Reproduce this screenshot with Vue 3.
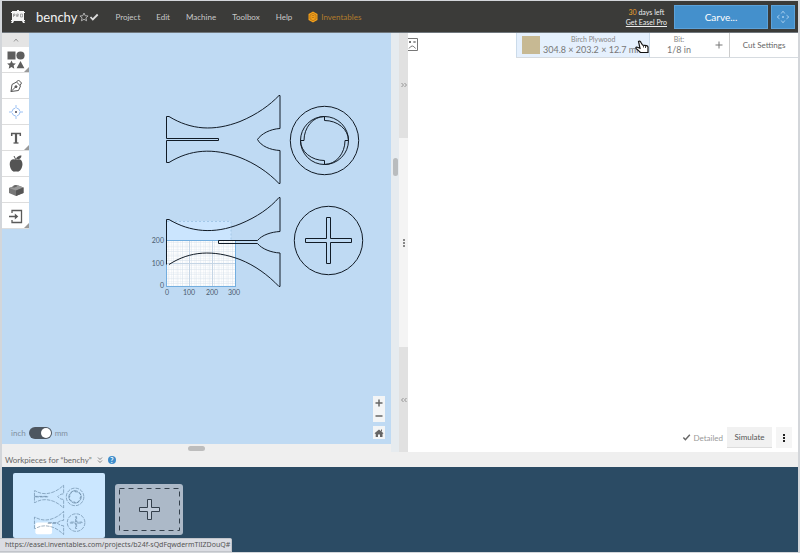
<script setup>
import { ref } from 'vue'

const menus = ['Project', 'Edit', 'Machine', 'Toolbox', 'Help']
const metric = ref(true)
const xTicks = [
  { x: 167, label: '0' },
  { x: 189, label: '100' },
  { x: 212, label: '200' },
  { x: 234, label: '300' },
]
const yTicks = [
  { y: 243, label: '200' },
  { y: 266, label: '100' },
  { y: 288, label: '0' },
]
</script>

<template>
  <div class="app">
    <header class="topbar">
      <svg class="logo" viewBox="0 0 16 16" aria-label="Easel Pro">
        <path d="M7 1h2v1h5v1h1v1h-1v7h1v1h-1l1 2h-2l-1-2H4l-1 2H1l1-2H1v-1h1V4H1V3h1V2h5z" fill="#f4f4f4" />
        <path d="M3.500 8V5h1.500v1.500H3.500M6.800 8V5h1.500v1.500H6.800L8.300 8M10.500 5h2v3h-2z" fill="none" stroke="#888" stroke-width=".7" />
      </svg>
      <h1 class="title">benchy</h1>
      <svg class="star" viewBox="0 0 10 10" aria-hidden="true"><path d="M5 1l1.200 2.700 2.900.3-2.200 1.900.7 2.900L5 7.300 2.400 8.800l.7-2.900L.9 4l2.900-.3z" fill="none" stroke="#bbb" stroke-width=".9" /></svg>
      <svg class="saved" viewBox="0 0 10 10" aria-hidden="true"><path d="M1.500 5l2.300 2.500L8.700 2.500" fill="none" stroke="#ddd" stroke-width="1.800" /></svg>
      <nav class="menu">
        <a v-for="m in menus" :key="m" href="#">{{ m }}</a>
        <a href="#" class="brand">
          <svg class="hex" viewBox="0 0 10 12" aria-hidden="true">
            <path d="M5 .5l4.500 2.500v6L5 11.500.5 9V3z" fill="#f5a11c" />
            <path d="M2 4l3-1.700L8 4v4L5 9.700 2 8zM3.500 5L5 4.200 6.500 5M3.500 7L5 6.200l1.500.8" fill="none" stroke="#a86c12" stroke-width=".7" />
          </svg>
          Inventables
        </a>
      </nav>
      <div class="trial">
        <span><b>30</b> days left</span>
        <a href="#">Get Easel Pro</a>
      </div>
      <button class="carve">Carve...</button>
      <button class="jog" aria-label="Jog machine">
        <svg viewBox="0 0 14 14"><path d="M5.200 3.500L7 1.200l1.800 2.300M5.200 10.500L7 12.800l1.800-2.300M3.500 5.200L1.200 7l2.300 1.800M10.500 5.200L12.800 7l-2.300 1.800M7 6v2M6 7h2" fill="none" stroke="#a4cdee" /></svg>
      </button>
    </header>

    <main class="workspace">
      <div class="left">
        <section class="canvas">
          <svg class="drawing" viewBox="2 33 390 411" width="390" height="411">
            <defs>
              <pattern id="grid" x="166.500" y="240" width="4.560" height="4.560" patternUnits="userSpaceOnUse">
                <path d="M0 0H4.560M0 2.280H4.560M0 0V4.560M2.280 0V4.560" stroke="#d3dee9" stroke-width=".5" />
              </pattern>
              <g id="parts" fill="none">
                <path d="M166.500 138.500V116.500H169C191 130 214 131.500 240 121.500C257 114.500 270 105 279 95.500H280V128.500C270 129 261 134 257.500 139.500C261 146 270 150 280 150.500V183.500H279C268 172 255 163.500 240 157.500C213 147.500 190 149.500 169 162.500H166.500V140.500H218.500V138.500Z" />
                <circle cx="324.500" cy="140.500" r="34.200" />
                <circle cx="324.500" cy="140.500" r="24" />
                <path d="M324.500 116.500V120.500A24 20 0 0 1 348.500 140.500H345A20.500 24 0 0 1 324.500 164.500V160.500A24 20 0 0 1 300.500 140.500H304A20.500 24 0 0 1 324.500 116.500" />
                <path d="M166.500 264.500V219.500H169C190 232 214 234.500 240 224C257 217 270 208 279 197.500H280V231.500C271 232 262 235 257.500 240.500H218.500V243.500H257.500C262 249 271 252.500 280 253V286.500H279C268 275 255 265.500 240 259.500C213 249.500 190 251 169 264.500" />
                <circle cx="328.500" cy="240.500" r="34.200" />
                <path d="M326.500 217.500H330.500V238.500H351.500V242.500H330.500V263.500H326.500V242.500H305.500V238.500H326.500Z" />
              </g>
            </defs>
            <rect x="167" y="221" width="64" height="19" fill="#cbe5fe" />
            <path d="M167 221.500H231V240" fill="none" stroke="#a3c8e8" stroke-dasharray="2 2" />
            <rect x="166.500" y="240.500" width="69" height="46" fill="#fff" />
            <rect x="166.500" y="240.500" width="69" height="46" fill="url(#grid)" />
            <path d="M189.500 240V286M212.500 240V286M167 263.500H235" stroke="#c5d5e5" />
            <rect x="166.500" y="240.500" width="69" height="46" fill="none" stroke="#73aedf" />
            <use href="#parts" stroke="#111b26" />
            <g class="ticks">
              <text v-for="t in xTicks" :key="'x' + t.x" :x="t.x" y="295" text-anchor="middle">{{ t.label }}</text>
              <text v-for="t in yTicks" :key="'y' + t.y" x="164" :y="t.y" text-anchor="end">{{ t.label }}</text>
            </g>
          </svg>

          <div class="tools">
            <button class="collapse" aria-label="Collapse toolbar">
              <svg viewBox="0 0 8 8"><path d="M2 5.500L4 3l2 2.500" fill="none" stroke="#999" /></svg>
            </button>
            <button class="tool more" aria-label="Shapes">
              <svg viewBox="0 0 20 20" fill="#5e5e5e"><path d="M1.500 1.500h8v8h-8z" /><circle cx="14.500" cy="5.500" r="4.100" /><path d="M5.500 10.500l1.300 2.800 3.100.3-2.300 2 .7 3.100-2.800-1.600-2.800 1.600.7-3.100-2.300-2 3.100-.3zM14.500 11l3.900 7.300h-7.800z" /></svg>
            </button>
            <button class="tool" aria-label="Pen">
              <svg viewBox="0 0 20 20" fill="none" stroke="#555"><path d="M5 15.500l1-7 4.500-2.500 4 4-2 4.500zM10.500 6l2-2 3 3-1.500 2.500M5 15.500l4.500-4.500" /><circle cx="10" cy="10.700" r="1" fill="#555" /></svg>
            </button>
            <button class="tool" aria-label="Drill point">
              <svg viewBox="0 0 20 20" fill="none" stroke="#9dc2f4"><circle cx="10" cy="10" r="4" stroke-dasharray="5 1.300" /><path d="M10 3v3M10 14v3M3 10h3M14 10h3" /><circle cx="10" cy="10" r="1" fill="#445" stroke="none" /></svg>
            </button>
            <button class="tool more" aria-label="Text">
              <svg viewBox="0 0 20 20" fill="none" stroke="#5a5a5a"><path d="M5.700 8V5.500h8.600V8" stroke-width="1.500" /><path d="M10 5v10" stroke-width="2.200" /><path d="M7.500 15h5" stroke-width="1.300" /></svg>
            </button>
            <button class="tool" aria-label="Icon library">
              <svg viewBox="0 0 20 20"><path d="M10.500 6C7 4 3.500 6 3.700 10.200 4 14.500 6.500 18 8.500 17.600c1-.3 2-.3 3 0 2 .4 4.700-3 5-7.400C16.500 6 13.500 4 10.500 6z" fill="#545454" /><path d="M10 6c0-3 2.500-4.500 5.500-4.500C15.500 4 13.500 5.500 10.500 5.500z" fill="#545454" /><path d="M8 2l2 4" stroke="#545454" /></svg>
            </button>
            <button class="tool" aria-label="Apps">
              <svg viewBox="0 0 20 20"><path d="M3 8l8-3 6.500 2.500v5.500L10 16l-7-3z" fill="#777" /><path d="M3 8l8-3 6.500 2.500L10 10.500z" fill="#999" /><path d="M10 10.500l7.500-3v5.500L10 16z" fill="#555" /><path d="M5.500 7.500l2-1v-1l2-.6 1.500.6v1l-2.500 1z" fill="#666" /></svg>
            </button>
            <button class="tool more" aria-label="Import">
              <svg viewBox="0 0 20 20" fill="none" stroke="#5a5a5a" stroke-width="1.300"><path d="M6 7V4.500h9.500v12H6V14M3 10.500h8" /><path d="M8.800 7.500l3.500 3-3.500 3z" fill="#5a5a5a" stroke="none" /></svg>
            </button>
          </div>

          <div class="canvas-foot">
            <label class="units">
              <span>inch</span>
              <input v-model="metric" type="checkbox" aria-label="Use millimetres" />
              <span>mm</span>
            </label>
            <div class="zoom">
              <div class="zoom-pair">
                <button aria-label="Zoom in"><svg viewBox="0 0 12 12"><path d="M6 2.500v7M2.500 6h7" stroke="#666" stroke-width="1.500" /></svg></button>
                <button aria-label="Zoom out"><svg viewBox="0 0 12 12"><path d="M2.500 6h7" stroke="#666" stroke-width="1.500" /></svg></button>
              </div>
              <button class="home" aria-label="Reset view"><svg viewBox="0 0 12 12"><path d="M1.500 6.200L6 2.500l4.500 3.700L9.500 7v3H7V7.500H5V10H2.700V7z" fill="#666" /><path d="M8.500 2.500v2" stroke="#666" /></svg></button>
            </div>
          </div>
        </section>
        <div class="gutter"><i class="v-thumb"></i></div>
        <div class="h-scroll"><i class="h-thumb"></i></div>
      </div>

      <div class="splitter">
        <button class="grey" aria-label="Expand design">
          <svg viewBox="0 0 8 8"><path d="M1.500 2l2 2-2 2M4.500 2l2 2-2 2" fill="none" stroke="#888" stroke-width=".9" /></svg>
        </button>
        <div class="grip"><i></i><i></i><i></i></div>
        <button class="grey" aria-label="Expand preview">
          <svg viewBox="0 0 8 8"><path d="M3.500 2l-2 2 2 2M6.500 2l-2 2 2 2" fill="none" stroke="#888" stroke-width=".9" /></svg>
        </button>
      </div>

      <section class="preview">
        <div class="preview-head">
          <svg class="sad" viewBox="0 0 12 13" aria-label="Preview unavailable"><path d="M0 .5h9.500v12H0M1 3l2 2M3 3l-2 2M5.500 3l2 2M7.500 3l-2 2M1 10.500Q4.300 5.500 7.500 10.500" fill="none" stroke="#777" /></svg>
          <div class="settings">
            <button class="material">
              <i class="swatch"></i>
              <span class="stack"><small>Birch Plywood</small><span class="size">304.8 × 203.2 × 12.7 mm</span></span>
            </button>
            <button class="bit"><small>Bit:</small><span>1/8 in</span></button>
            <button class="add" aria-label="Add bit"><svg viewBox="0 0 10 10"><path d="M5 1.500v7M1.500 5h7" stroke="#777" /></svg></button>
            <button class="cut">Cut Settings</button>
            <svg class="pointer" viewBox="0 0 14 14" aria-hidden="true"><path d="M3.500 1.500c1-1 2 0 2.500 1L7.500 5l4 .7c1.200.3 1.700 1 1.500 2V12.500H5.500L1 8.500c-.5-1 .5-1.700 1.500-1.200L5 8.200z" fill="#fff" stroke="#111" stroke-width="1.200" /><path d="M8.500 5.500v2M10.500 6v2" stroke="#111" stroke-width=".8" /></svg>
          </div>
        </div>
        <div class="preview-foot">
          <span class="detail"><svg viewBox="0 0 10 10" aria-hidden="true"><path d="M1.500 5l2.300 2.500L8.700 2" fill="none" stroke="#666" stroke-width="1.600" /></svg>Detailed</span>
          <button class="simulate">Simulate</button>
          <button class="dots" aria-label="More options"><i></i><i></i><i></i></button>
        </div>
      </section>
    </main>

    <section class="pieces">
      <div class="pieces-head">
        <span>Workpieces for “benchy”</span>
        <svg class="chev" viewBox="0 0 8 8" aria-hidden="true"><path d="M2 1.500l2 2 2-2M2 4.500l2 2 2-2" fill="none" stroke="#777" stroke-width=".9" /></svg>
        <button class="help" aria-label="Help">?</button>
      </div>
      <div class="pieces-list">
        <button class="thumb" aria-label="Workpiece 1">
          <svg viewBox="83 48 358 252">
            <rect x="170" y="240" width="65" height="46" rx="8" fill="#fff" />
            <use href="#parts" stroke="#4a6c8a" stroke-width="2" stroke-dasharray="14 4" />
          </svg>
        </button>
        <button class="new" aria-label="Add workpiece">
          <svg viewBox="0 0 68 51"><rect x="4.500" y="4.500" width="60" height="42" fill="none" stroke="#34404c" stroke-dasharray="5 4" /><path d="M32.500 15.500h4v8h8v4h-8v8h-4v-8h-8v-4h8z" fill="#c1ccda" stroke="#34404c" /></svg>
        </button>
      </div>
    </section>
    <div class="status">https://easel.inventables.com/projects/b24f-sQdFqwdermTlIZDouQ#</div>
  </div>
</template>

<style>
body { margin: 0; }
</style>

<style scoped>
* { box-sizing: border-box; }
.app {
  position: relative;
  display: flex;
  flex-direction: column;
  min-height: 100vh;
  padding: 1px 2px;
  background: #d3d6da;
  font-family: Lato, "Liberation Sans", sans-serif;
  font-size: 8px;
  color: #666;
}
button { display: flex; align-items: center; justify-content: center; margin: 0; padding: 0; border: 0; background: none; font: inherit; color: inherit; }
svg { display: block; flex: none; }
a { color: inherit; text-decoration: none; }

.topbar { display: flex; align-items: center; height: 32px; padding: 0 3px 0 8px; background: #3b3b39; color: #c9c9c9; border-bottom: 1px solid #70777d; }
.logo { width: 16px; height: 16px; }
.title { margin: 0 2px 0 10px; font-size: 13px; line-height: 18px; font-weight: 400; color: #f2f2f2; }
.star, .saved { width: 10px; height: 10px; }
.menu { display: flex; align-items: center; gap: 16px; flex: 1; margin-left: 16px; }
.brand { display: flex; align-items: center; gap: 3px; color: #b27c2c; }
.hex { width: 10px; height: 12px; }
.trial { display: flex; flex-direction: column; align-items: center; margin-right: 7px; font-size: 7px; line-height: 10px; color: #eee; }
.trial b { font-weight: 400; color: #e8a130; }
.trial a { text-decoration: underline; }
.carve { width: 94px; height: 24px; margin-right: 3px; background: #4490cc; border: 1px solid #5ca2da; color: #fff; font-size: 10px; }
.jog { width: 24px; height: 24px; background: #4490cc; border: 1px solid #5ca2da; }
.jog svg { width: 14px; height: 14px; }

.workspace { display: flex; flex: 1; background: #efefef; }
.left { flex: 51; display: grid; grid-template-columns: 1fr 8px; grid-template-rows: 1fr 8px; }
.canvas { position: relative; display: flex; flex-direction: column; justify-content: space-between; background: #bfdaf3; overflow: hidden; }
.drawing { position: absolute; top: 0; left: 0; }
.ticks { font-size: 7px; fill: #4b5c6e; }
.tools { position: relative; width: 27px; background: #fff; }
.collapse { width: 100%; height: 14px; background: #e4e4e4; }
.collapse svg { width: 8px; height: 8px; }
.tool { position: relative; width: 100%; height: 26px; border-bottom: 1px solid #ddd; }
.tool svg { width: 20px; height: 20px; }
.more::after { content: ""; position: absolute; right: 0; bottom: 0; border: solid transparent; border-width: 5px 0 0 5px; border-bottom: 5px solid #999; border-top: 0; }
.canvas-foot { position: relative; display: flex; align-items: flex-end; justify-content: space-between; padding: 0 6px 5px 9px; }
.units { display: flex; align-items: center; gap: 3px; line-height: 12px; color: #7f8f9e; }
.units input { appearance: none; display: flex; justify-content: flex-end; width: 23px; height: 12px; margin: 0; border-radius: 6px; background: #4d5660; }
.units input::before { content: ""; width: 10px; height: 10px; margin: 1px; border-radius: 50%; background: #fff; }
.units input:not(:checked) { justify-content: flex-start; }
.zoom { display: flex; flex-direction: column; gap: 4px; }
.zoom button { width: 12px; height: 13px; background: #f3f5f6; }
.zoom svg { width: 12px; height: 12px; }
.gutter { display: flex; justify-content: center; padding-top: 125px; background: #e6ebef; grid-row: span 2; }
.v-thumb { width: 5px; height: 18px; border-radius: 3px; background: #b9bcbe; }
.h-scroll { display: flex; justify-content: center; align-items: center; background: #efefef; }
.h-thumb { width: 17px; height: 5px; border-radius: 3px; background: #bdbdbd; }

.splitter { display: flex; flex-direction: column; width: 9px; background: #f4f4f4; }
.grey { flex: 1; background: #e1e1e1; }
.grey svg { width: 8px; height: 8px; }
.grip { display: flex; flex-direction: column; align-items: center; justify-content: center; gap: 1px; flex: 2; }
.grip i { width: 2px; height: 2px; background: #888; }

.preview { flex: 50; display: flex; flex-direction: column; justify-content: space-between; background: #fff; }
.preview-head { display: flex; justify-content: space-between; align-items: flex-start; }
.sad { width: 12px; height: 13px; margin-top: 5px; }
.settings { position: relative; display: flex; height: 25px; border-bottom: 1px solid #d6dbe0; }
.material { width: 134px; gap: 3px; padding-left: 5px; justify-content: flex-start; background: #e5f0fd; border: solid #cbdbea; border-width: 0 1px; overflow: hidden; }
.swatch { flex: none; width: 18px; height: 18px; background: #c7b993; }
.stack { display: flex; flex-direction: column; align-items: center; white-space: nowrap; }
.settings small { font-size: 7px; line-height: 10px; color: #888; }
.size, .bit span { font-size: 9px; line-height: 12px; color: #777; }
.bit { flex-direction: column; width: 58px; }
.add { width: 21px; }
.add svg { width: 10px; height: 10px; }
.cut { width: 69px; border-left: 1px solid #ccc; }
.pointer { position: absolute; left: 119px; top: 7px; width: 14px; height: 14px; }
.preview-foot { display: flex; justify-content: flex-end; align-items: center; gap: 4px; padding: 0 6px 4px; }
.detail { display: flex; align-items: center; gap: 2px; color: #999; }
.detail svg { width: 9px; height: 9px; }
.simulate { width: 45px; height: 21px; background: #f1f1f1; border-bottom: 1px solid #ddd; color: #555; }
.dots { flex-direction: column; gap: 1px; width: 16px; height: 21px; background: #f5f5f5; }
.dots i { width: 2px; height: 2px; background: #222; }

.pieces-head { display: flex; align-items: center; gap: 4px; height: 15px; padding-left: 3px; background: #efefef; }
.chev { width: 8px; height: 8px; }
.help { width: 8px; height: 8px; border-radius: 50%; background: #3e8dcb; color: #fff; font-size: 7px; line-height: 8px; font-weight: 700; }
.pieces-list { display: flex; align-items: flex-start; gap: 10px; height: 85px; padding: 6px 11px; background: #2b4b64; }
.thumb { width: 92px; height: 65px; background: #cbe7ff; border-radius: 2px; }
.thumb svg { width: 92px; height: 65px; }
.new { width: 68px; height: 51px; margin-top: 11px; border-radius: 3px; background: #acb9c8; }
.new svg { width: 68px; height: 51px; }
.status { position: absolute; left: 0; bottom: 1px; height: 14px; padding: 0 1px 0 5px; background: #dbdde3; border: 1px solid #c1c4ca; border-left: 0; border-radius: 0 2px 0 0; font-family: "Noto Sans", sans-serif; font-size: 7px; line-height: 12px; color: #555; }
</style>
